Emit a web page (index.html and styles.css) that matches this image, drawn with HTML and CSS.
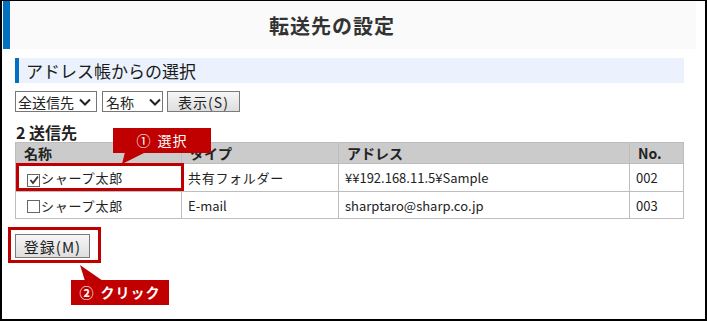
FILE: index.html
```html
<!DOCTYPE html>
<html>

<head>
    <title>転送先の設定</title>
    <link rel="stylesheet" href="styles.css">
</head>

<body>
    <div class="frame">
        <div class="header">
            <h1 class="title">転送先の設定</h1>
        </div>

        <div class="content">
            <h2 class="section">アドレス帳からの選択</h2>

            <div class="toolbar">
                <span class="select select-group">全送信先
                    <svg class="chevron" width="12" height="8" viewBox="0 0 12 8"><path d="M1 1.5 L6 6.5 L11 1.5" fill="none" stroke="#222" stroke-width="2"/></svg>
                </span>
                <span class="select select-sort">名称
                    <svg class="chevron" width="12" height="8" viewBox="0 0 12 8"><path d="M1 1.5 L6 6.5 L11 1.5" fill="none" stroke="#222" stroke-width="2"/></svg>
                </span>
                <button class="btn btn-show">表示(S)</button>
            </div>

            <div class="count">2 送信先</div>

            <table class="list">
                <colgroup>
                    <col style="width: 166px;">
                    <col style="width: 157px;">
                    <col style="width: 291px;">
                    <col style="width: 54px;">
                </colgroup>
                <thead>
                    <tr>
                        <th>名称</th>
                        <th>タイプ</th>
                        <th>アドレス</th>
                        <th>No.</th>
                    </tr>
                </thead>
                <tbody>
                    <tr class="row-1">
                        <td class="name">
                            <span class="check checked">
                                <svg width="10" height="10" viewBox="0 0 10 10"><path d="M1.5 5 L4 8 L9 1.5" fill="none" stroke="#333" stroke-width="1.8"/></svg>
                            </span>シャープ太郎
                        </td>
                        <td class="jp">共有フォルダー</td>
                        <td>¥¥192.168.11.5¥Sample</td>
                        <td>002</td>
                    </tr>
                    <tr class="row-2">
                        <td class="name"><span class="check"></span>シャープ太郎</td>
                        <td>E-mail</td>
                        <td>sharptaro@sharp.co.jp</td>
                        <td>003</td>
                    </tr>
                </tbody>
            </table>

            <button class="btn btn-register">登録(M)</button>
        </div>

        <!-- 注記 -->
        <svg class="tails" width="707" height="321" viewBox="0 0 707 321">
            <polygon points="125,152 146,152 122,164" fill="#c00000"/>
            <polygon points="85,281 103,281 80,265" fill="#c00000"/>
        </svg>
        <div class="mark mark-row"></div>
        <div class="mark mark-btn"></div>
        <div class="callout callout-1"><span class="num">①</span>選択</div>
        <div class="callout callout-2"><span class="num">②</span>クリック</div>
    </div>
</body>

</html>
```

FILE: styles.css
```css
body {
    margin: 0;
    font-family: "Noto Sans CJK JP", "Liberation Sans", sans-serif;
    color: #222;
    background-color: #fff;
}

.frame {
    position: relative;
    width: 707px;
    height: 321px;
    box-sizing: border-box;
    border: solid #000;
    border-width: 1px 2px 2px 2px;
    overflow: hidden;
}

.header {
    display: flex;
    align-items: center;
    height: 48px;
    margin: 0 9px 0 1px;
    padding-left: 259px;
    border-left: 7px solid #0070c0;
    background-color: #fafafa;
}

.title {
    margin: 0;
    font-size: 20px;
    font-weight: bold;
    color: #333;
    letter-spacing: 1px;
}

.content {
    margin: 0 21px 0 13px;
}

.section {
    margin: 9px 0 0;
    height: 25px;
    line-height: 25px;
    padding-left: 7px;
    border-left: 4px solid #0070c0;
    background-color: #ebf2fd;
    font-size: 17px;
    font-weight: normal;
    color: #1a1a1a;
}

.toolbar {
    display: flex;
    margin-top: 8px;
    height: 21px;
}

.select {
    display: flex;
    align-items: center;
    box-sizing: border-box;
    height: 21px;
    padding-left: 2px;
    border: 1px solid #767676;
    font-size: 14px;
    line-height: 1;
}

.select-group {
    width: 82px;
    margin-right: 5px;
}

.select-group .chevron {
    margin-left: 5px;
}

.select-sort {
    width: 61px;
    margin-right: 4px;
    padding-left: 3px;
}

.select-sort .chevron {
    margin-left: 15px;
}

.btn {
    box-sizing: border-box;
    padding: 0;
    border: 1px solid #7a7a7a;
    background: linear-gradient(#f6f6f6, #dedede);
    font-family: "Noto Sans CJK JP", "Liberation Sans", sans-serif;
    font-size: 14px;
    color: #222;
    line-height: 1;
    letter-spacing: 1px;
}

.btn-show {
    width: 73px;
    height: 21px;
}

.count {
    display: flex;
    align-items: flex-end;
    height: 30px;
    font-size: 16px;
    font-weight: bold;
    line-height: 20px;
    padding-left: 1px;
}

.list {
    width: 668px;
    table-layout: fixed;
    border-collapse: collapse;
    font-size: 13px;
}

.list th,
.list td {
    border: 1px solid #bdbdbd;
    text-align: left;
    white-space: nowrap;
    overflow: hidden;
}

.list th {
    height: 20px;
    padding: 0 8px;
    background-color: #cbcbcb;
    font-size: 14px;
    font-weight: bold;
    line-height: 20px;
}

.list td {
    padding: 0 6px;
}

.row-1 td {
    height: 27px;
}

.row-2 td {
    height: 26px;
}

.list td.name {
    padding-left: 11px;
    letter-spacing: 0.8px;
}

.list td.jp {
    letter-spacing: 0.7px;
}

.check {
    display: inline-flex;
    align-items: center;
    justify-content: center;
    box-sizing: border-box;
    width: 13px;
    height: 13px;
    margin-right: 1px;
    border: 1px solid #666;
    background-color: #fff;
    vertical-align: -2px;
}

.btn-register {
    display: block;
    width: 75px;
    height: 24px;
    margin-top: 15px;
    font-size: 15px;
}

.tails {
    position: absolute;
    left: -2px;
    top: -1px;
    pointer-events: none;
}

.mark {
    position: absolute;
    box-sizing: border-box;
    border: 3px solid #c00000;
}

.mark-row {
    left: 14px;
    top: 162px;
    width: 168px;
    height: 28px;
}

.mark-btn {
    left: 6px;
    top: 226px;
    width: 93px;
    height: 36px;
}

.callout {
    position: absolute;
    width: 98px;
    height: 25px;
    background-color: #c00000;
    color: #fff;
    font-size: 14px;
    line-height: 25px;
    text-align: center;
    letter-spacing: 1px;
}

.callout .num {
    margin-right: 6px;
}

.callout-1 {
    left: 111px;
    top: 127px;
}

.callout-2 {
    left: 69px;
    top: 279px;
    font-weight: bold;
}
```
